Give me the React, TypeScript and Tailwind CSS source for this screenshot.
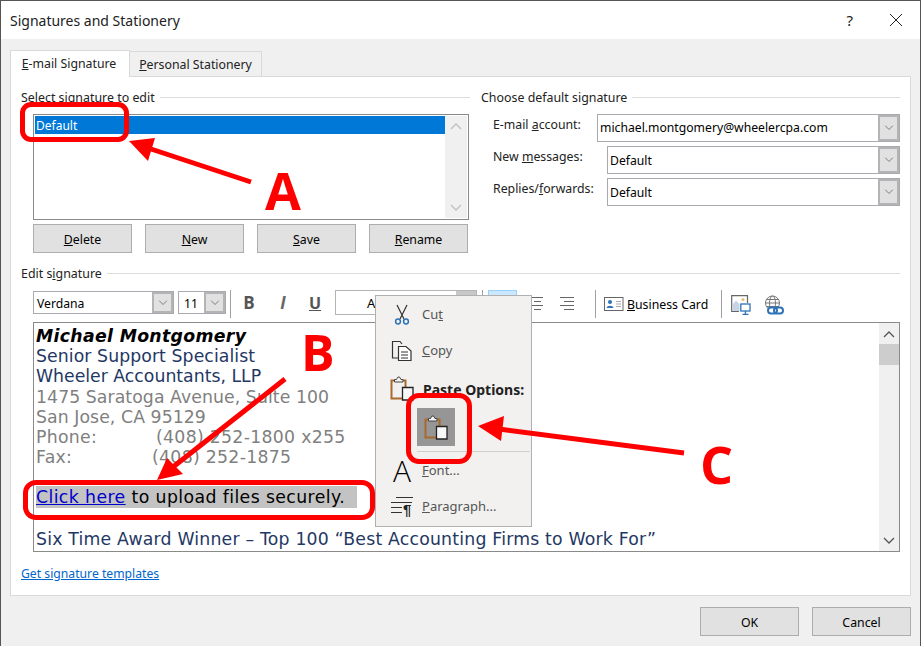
import type { ReactNode } from "react"

const ui = "font-['Noto_Sans',sans-serif]"
const verdana = "font-['DejaVu_Sans',sans-serif]"

function Chevron({ up = false, className = "" }: { up?: boolean; className?: string }) {
  return (
    <svg width="12" height="8" viewBox="0 0 12 8" className={className} fill="none" stroke="currentColor" strokeWidth="1.3">
      <polyline points={up ? "1,7 6,2 11,7" : "1,1 6,6 11,1"} />
    </svg>
  )
}

function Legend({ label, className = "" }: { label: ReactNode; className?: string }) {
  return (
    <div className={`flex h-4 items-center gap-[5px] text-[12.4px] leading-4 text-[#222] ${className}`}>
      <span className="whitespace-nowrap pt-[2px]">{label}</span>
      <div className="h-px flex-1 bg-[#dcdcdc]" />
    </div>
  )
}

function Combo({
  value,
  className = "",
  height = "h-[28px]",
  leading = "leading-[27px]",
}: {
  value: string
  className?: string
  height?: string
  leading?: string
}) {
  return (
    <div className={`flex items-stretch border border-[#a9a9b0] bg-white ${height} ${className}`}>
      <div className={`flex-1 truncate pl-[2px] text-[12.2px] text-black ${leading}`}>{value}</div>
      <div className="flex w-[21px] items-center justify-center border-2 border-[#b4b4b4] bg-[#e1e1e1] text-[#777]">
        <Chevron className="h-[6px] w-[10px]" />
      </div>
    </div>
  )
}

function DialogButton({ children, className = "" }: { children: ReactNode; className?: string }) {
  return (
    <div className={`flex h-[29px] w-[99px] items-center justify-center border border-[#adadad] bg-[#e1e1e1] pt-[3px] text-[12.3px] text-black ${className}`}>
      {children}
    </div>
  )
}

function ScissorsIcon() {
  return (
    <svg width="18" height="22" viewBox="0 0 18 22" fill="none">
      <path d="M4 1 L11 15 M14 1 L7 15" stroke="#333" strokeWidth="1.2" />
      <circle cx="5" cy="17.5" r="2.4" stroke="#2f73b7" strokeWidth="1.5" />
      <circle cx="13" cy="17.5" r="2.4" stroke="#2f73b7" strokeWidth="1.5" />
    </svg>
  )
}

function CopyIcon() {
  return (
    <svg width="22" height="22" viewBox="0 0 22 22" fill="none" stroke="#333" strokeWidth="1.2">
      <path d="M7 18 H1.5 V1.5 H9 L11 4" />
      <path d="M7.5 6.5 H15 L20 11 V20.5 H7.5 Z" fill="#fff" />
      <path d="M10 12 H17 M10 15 H17 M10 18 H17" strokeWidth="1" />
    </svg>
  )
}

function PasteIcon() {
  return (
    <svg width="24" height="25" viewBox="0 0 24 25" fill="none">
      <path d="M1.5 4.5 H15.5 V22.5 H1.5 Z" stroke="#a9692c" strokeWidth="2" />
      <path d="M4.5 6 V3.5 H6.5 L8 1 H9.5 L11 3.5 H13 V6 Z" fill="#f4f4f4" stroke="#444" strokeWidth="1" />
      <path d="M12.5 11.5 H23 V24 H12.5 Z" fill="#f8f8f8" stroke="#222" strokeWidth="1.3" />
    </svg>
  )
}

function ParagraphIcon() {
  return (
    <div className="relative h-[20px] w-[22px] text-[#222]">
      <div className="absolute left-[5px] top-0 h-px w-[17px] bg-[#333]" />
      <div className="absolute left-0 top-[5px] h-px w-[21px] bg-[#333]" />
      <div className="absolute left-0 top-[10px] h-px w-[11px] bg-[#333]" />
      <div className="absolute left-0 top-[15px] h-px w-[11px] bg-[#333]" />
      <span className="absolute left-[12px] top-[5px] font-['Liberation_Sans',sans-serif] text-[15px] font-bold leading-[15px]">¶</span>
    </div>
  )
}

function CardIcon() {
  return (
    <svg width="20" height="15" viewBox="0 0 20 15" fill="none">
      <rect x="0.5" y="0.5" width="18.5" height="13" stroke="#666" />
      <circle cx="6" cy="5" r="2" fill="#2f73b7" />
      <path d="M2.5 11 C3 8 9 8 9.5 11 Z" fill="#2f73b7" />
      <path d="M12 4.5 H17 M12 7 H17 M12 9.5 H17" stroke="#aaa" />
    </svg>
  )
}

function PictureIcon() {
  return (
    <svg width="20" height="20" viewBox="0 0 20 20" fill="none">
      <path d="M8 16.5 H0.7 V0.7 H16.5 V8" stroke="#666" strokeWidth="1.2" />
      <circle cx="12" cy="4.5" r="1.5" fill="#f2b968" />
      <path d="M2 16 V9 L5 5.5 L8.5 9 V16 Z" fill="#c6d4e6" />
      <rect x="9.8" y="9" width="9.2" height="7" fill="#fff" stroke="#2f73b7" strokeWidth="1.3" />
      <path d="M14.4 16 V19 M11.5 19.3 H17.5" stroke="#2f73b7" strokeWidth="1.3" />
    </svg>
  )
}

function GlobeLinkIcon() {
  return (
    <svg width="20" height="20" viewBox="0 0 20 20" fill="none">
      <g stroke="#777" strokeWidth="1">
        <circle cx="8.5" cy="8" r="7" />
        <ellipse cx="8.5" cy="8" rx="3" ry="7" />
        <path d="M1.5 8 H15.5 M2.5 4.5 H14.5 M2.5 11.5 H14.5" />
      </g>
      <rect x="4" y="12.5" width="9" height="6" rx="3" fill="#fff" stroke="#2f73b7" strokeWidth="2" />
      <rect x="10" y="12.5" width="9" height="6" rx="3" fill="none" stroke="#2f73b7" strokeWidth="2" />
    </svg>
  )
}

function MenuItem({ icon, children, className = "" }: { icon: ReactNode; children: ReactNode; className?: string }) {
  return (
    <div className={`flex h-[36px] items-center text-[13px] text-[#555] ${className}`}>
      <div className="flex w-[46px] shrink-0 justify-center pl-[6px]">{icon}</div>
      <div>{children}</div>
    </div>
  )
}

function ContextMenu() {
  return (
    <div className={`absolute left-[374px] top-[294px] h-[232px] w-[157px] border border-[#b0b0b0] bg-[#f2f1f0] pt-[1px] ${ui}`}>
      <MenuItem icon={<ScissorsIcon />}><span>Cu<u>t</u></span></MenuItem>
      <MenuItem icon={<CopyIcon />}><span><u>C</u>opy</span></MenuItem>
      <MenuItem icon={<div className="mb-[4px]"><PasteIcon /></div>} className="mt-[3px]">
        <span className="pl-px text-[14px] font-bold text-[#222]">Paste Options:</span>
      </MenuItem>
      <div className="ml-[41px] flex h-[38px] w-[38px] items-center justify-center bg-[#969696]">
        <PasteIcon />
      </div>
      <div className="ml-[41px] mr-[1px] mt-[5px] h-px bg-[#d0cfce]" />
      <MenuItem icon={<span className="font-['Open_Sans',sans-serif] text-[30px] font-light leading-[32px] text-black">A</span>} className="mt-[1px]">
        <span><u>F</u>ont...</span>
      </MenuItem>
      <MenuItem icon={<ParagraphIcon />}><span><u>P</u>aragraph...</span></MenuItem>
    </div>
  )
}

function Annotations() {
  return (
    <>
      <svg className="absolute left-0 top-0" width="921" height="646" viewBox="0 0 921 646" fill="none">
        <path d="M150 148 L250 181" stroke="#ff0000" strokeWidth="5" />
        <polygon points="128,140 154,137 147,160" fill="#ff0000" />
        <path d="M284 378 L172 466" stroke="#ff0000" strokeWidth="5" />
        <polygon points="156,479 166,457 182,473" fill="#ff0000" />
        <path d="M498 428 L683 452" stroke="#ff0000" strokeWidth="5" />
        <polygon points="477,425 503,415 500,440" fill="#ff0000" />
      </svg>
      <div className="absolute left-[19px] top-[101px] h-[40px] w-[109px] rounded-[11px] border-[5px] border-[#ff0000]" />
      <div className="absolute left-[22px] top-[479px] h-[40px] w-[352px] rounded-[13px] border-[5px] border-[#ff0000]" />
      <div className="absolute left-[405px] top-[392px] h-[71px] w-[66px] rounded-[13px] border-[5px] border-[#ff0000]" />
      <span className="absolute left-[264px] top-[158px] font-['Open_Sans',sans-serif] text-[52px] font-bold leading-[62px] text-[#ff0000]">A</span>
      <span className="absolute left-[300px] top-[320px] font-['Open_Sans',sans-serif] text-[50px] font-bold leading-[62px] text-[#ff0000]">B</span>
      <span className="absolute left-[699px] top-[432px] font-['Open_Sans',sans-serif] text-[52px] font-bold leading-[62px] text-[#ff0000]">C</span>
    </>
  )
}

function Toolbar() {
  return (
    <div className="ml-[12px] flex h-[26px] items-start">
      <Combo value="Verdana" className="mt-[1px] w-[141px] pl-[1px]" height="h-[23px]" leading="leading-[23px]" />
      <Combo value="11" className="ml-[4px] mt-[1px] w-[48px] pl-[3px]" height="h-[23px]" leading="leading-[23px]" />
      <div className="ml-[4px] h-[28px] w-px bg-[#a0a0a0]" />
      <div className="ml-[12px] flex h-[26px] w-[12px] items-center justify-center font-['Open_Sans',sans-serif] text-[17px] font-bold text-[#555]">B</div>
      <div className="ml-[22px] flex h-[26px] w-[12px] items-center justify-center font-['Open_Sans',sans-serif] text-[17px] font-bold italic text-[#666]">I</div>
      <div className="ml-[20px] flex h-[26px] w-[12px] items-center justify-center font-['Open_Sans',sans-serif] text-[16px] font-bold text-[#555] underline">U</div>
      <div className="ml-[14px] flex h-[25px] w-[142px] items-start justify-between border border-[#b4b4b4] bg-white pl-[31px]">
        <span className="text-[13px] leading-[25px] text-black">A</span>
        <div className="h-[23px] w-[20px] bg-[#c8c8c8]" />
      </div>
      <div className="ml-[5px] h-[28px] w-px bg-[#a0a0a0]" />
      <div className="ml-[5px] h-[24px] w-[29px] border border-[#99d1ff] bg-[#cce8ff]" />
      <div className="ml-[15px] mt-[7px] flex w-[11px] flex-col gap-[3px]">
        <div className="h-px bg-[#666]" />
        <div className="mx-[2px] h-px bg-[#666]" />
        <div className="h-px bg-[#666]" />
        <div className="mx-[2px] h-px bg-[#666]" />
      </div>
      <div className="ml-[17px] mt-[7px] flex w-[14px] flex-col items-end gap-[3px]">
        <div className="h-px w-full bg-[#666]" />
        <div className="h-px w-[10px] bg-[#666]" />
        <div className="h-px w-full bg-[#666]" />
        <div className="h-px w-[10px] bg-[#666]" />
      </div>
      <div className="ml-[21px] h-[28px] w-px bg-[#a0a0a0]" />
      <div className="ml-[8px] mt-[7px]"><CardIcon /></div>
      <div className="ml-[3px] w-[81px] whitespace-nowrap text-[12.3px] leading-[30px] text-black"><u>B</u>usiness Card</div>
      <div className="ml-[13px] h-[28px] w-px bg-[#a0a0a0]" />
      <div className="ml-[9px] mt-[5px]"><PictureIcon /></div>
      <div className="ml-[13px] mt-[5px]"><GlobeLinkIcon /></div>
    </div>
  )
}

function SignatureEditor() {
  const navy = "text-[#1f3864]"
  const gray = "text-[#808080]"
  return (
    <div className="ml-[12px] flex h-[230px] overflow-hidden border border-[#8a8a8a] bg-white">
      <div className={`flex-1 overflow-hidden whitespace-pre pl-[2px] pt-[3px] text-[17.3px] leading-[20.2px] ${verdana}`}>
        <div className="font-bold italic tracking-[0.33px] text-black">Michael Montgomery</div>
        <div className={`tracking-[0.08px] ${navy}`}>Senior Support Specialist</div>
        <div className={navy}>Wheeler Accountants, LLP</div>
        <div className={`tracking-[0.07px] ${gray}`}>1475 Saratoga Avenue, Suite 100</div>
        <div className={`tracking-[0.07px] ${gray}`}>San Jose, CA 95129</div>
        <div className={`flex tracking-[0.3px] ${gray}`}><span className="w-[120px]">Phone:</span><span>(408) 252-1800 x255</span></div>
        <div className={`flex tracking-[0.3px] ${gray}`}><span className="w-[116px]">Fax:</span><span>(408) 252-1875</span></div>
        <div className="h-[19px]" />
        <div className="h-[22px] w-[321px] bg-[#c3c3c3] leading-[22px] tracking-[0.4px] text-black">
          <span className="text-[#0000cc] underline">Click here</span> to upload files securely.
        </div>
        <div className={`mt-[21px] tracking-[0.2px] ${navy}`}>Six Time Award Winner – Top 100 “Best Accounting Firms to Work For”</div>
      </div>
      <div className="flex w-[20px] flex-col items-center justify-between bg-[#f0f0f0] text-[#555]">
        <div className="flex w-full flex-col items-center">
          <div className="flex h-[21px] items-center"><Chevron up /></div>
          <div className="h-[21px] w-full bg-[#cdcdcd]" />
        </div>
        <div className="flex h-[21px] items-center"><Chevron /></div>
      </div>
    </div>
  )
}

export default function App() {
  return (
    <div className={`relative h-[646px] w-[921px] overflow-hidden border-l border-r border-t border-[#555] bg-[#f0f0f0] ${ui}`}>
      <div className="flex h-[38px] items-center bg-white pl-[9px] text-[14px] text-[#222]">
        <span className="flex-1">Signatures and Stationery</span>
        <span className="mr-[36px] text-[15px]">?</span>
        <svg width="14" height="14" viewBox="0 0 14 14" className="mr-[17px]" stroke="#222" strokeWidth="1">
          <path d="M1 1 L13 13 M13 1 L1 13" />
        </svg>
      </div>

      <div className="ml-[9px] mt-[10px] flex h-[27px] items-end text-[12.3px] text-[#222]">
        <div className="relative z-10 -mb-px flex h-[27px] w-[120px] items-center justify-center border border-b-0 border-[#d9d9d9] bg-white pr-[2px]"><span><u>E</u>-mail Signature</span></div>
        <div className="flex h-[25px] w-[132px] items-center justify-center border-r border-t border-[#d9d9d9] bg-[#f0f0f0] pt-[2px]"><span><u>P</u>ersonal Stationery</span></div>
      </div>

      <div className="ml-[9px] flex h-[520px] w-[901px] flex-col border border-[#d9d9d9] bg-white pl-[10px] pr-[10px] pt-[12px]">
        <div className="flex gap-[11px]">
          <div className="w-[449px]">
            <Legend label="Select signature to edit" />
            <div className="ml-[12px] mt-[9px] flex h-[106px] w-[436px] border border-[#8a8a8a] p-px">
              <div className="h-[18px] flex-1 bg-[#0078d7] pl-px text-[12px] leading-[20px] text-white">Default</div>
              <div className="flex w-[22px] flex-col items-center justify-between bg-[#f0f0f0] py-[6px] text-[#c0c0c0]">
                <Chevron up />
                <Chevron />
              </div>
            </div>
            <div className="ml-[12px] mt-[4px] flex gap-[14px]">
              <DialogButton><span><u>D</u>elete</span></DialogButton>
              <DialogButton className="-ml-px"><span><u>N</u>ew</span></DialogButton>
              <DialogButton className="-ml-px"><span><u>S</u>ave</span></DialogButton>
              <DialogButton className="-ml-px"><span><u>R</u>ename</span></DialogButton>
            </div>
          </div>
          <div className="flex-1">
            <Legend label="Choose default signature" />
            <div className="mt-[9px] flex flex-col gap-[4px] pl-[12px] text-[12.3px] text-[#222]">
              <div className="flex justify-between">
                <span className="leading-[21px]">E-mail <u>a</u>ccount:</span>
                <Combo value="michael.montgomery@wheelercpa.com" className="w-[303px]" leading="leading-[26px]" />
              </div>
              <div className="flex justify-between">
                <span className="leading-[21px]">New <u>m</u>essages:</span>
                <Combo value="Default" className="w-[293px]" />
              </div>
              <div className="flex justify-between">
                <span className="leading-[21px]">Replies/<u>f</u>orwards:</span>
                <Combo value="Default" className="w-[293px]" />
              </div>
            </div>
          </div>
        </div>

        <Legend label={<span>Edit s<u>i</u>gnature</span>} className="mt-[12px]" />
        <div className="mt-[9px]"><Toolbar /></div>
        <div className="mt-[6px]"><SignatureEditor /></div>
        <div className="mt-[14px] text-[12.2px] leading-4 text-[#0066cc] underline">Get signature templates</div>
      </div>

      <div className="mt-[11px] flex justify-end gap-[13px] pr-[9px]">
        <DialogButton className="h-[28px]">OK</DialogButton>
        <DialogButton className="h-[28px]">Cancel</DialogButton>
      </div>

      <ContextMenu />
      <Annotations />
    </div>
  )
}
